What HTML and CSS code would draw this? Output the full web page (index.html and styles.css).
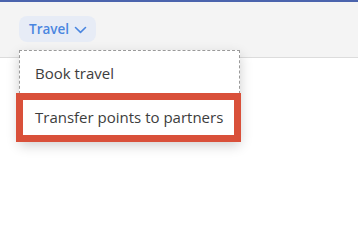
FILE: index.html
```html
<!DOCTYPE html>
<html lang="en">
<head>
	<meta charset="UTF-8">
	<title>Travel menu</title>
	<link rel="stylesheet" href="styles.css">
</head>
<body>
<div class='page'>
	<div class='bar'>
		<span class='pill'>Travel
			<svg width="13" height="8" viewBox="0 0 13 8"><path d="M1.5 1.5 L6.5 6.3 L11.5 1.5" fill="none" stroke="#4a86e0" stroke-width="1.6" stroke-linecap="round" stroke-linejoin="round"/></svg>
		</span>
	</div>
	<div class='menu'>
		<div class='item first'>Book travel</div>
		<div class='item active'>Transfer points to partners</div>
	</div>
</div>
</body>
</html>
```

FILE: styles.css
```css
html, body{
	margin:0;
	height:100%;
	background:#fff;
	font-family: 'Open Sans', 'Noto Sans', sans-serif;
}
.page{
	position:relative;
	height:100%;
}
.bar{
	height:41px;
	padding:14px 0 0 19px;
	background:#f4f4f4;
	border-top:2px solid #4b64ad;
	border-bottom:1px solid #dcdcdc;
}
.pill{
	display:inline-flex;
	align-items:center;
	gap:5px;
	height:26px;
	padding:0 9px 0 10px;
	border-radius:8px;
	background:#e7ecf6;
	color:#4a86e0;
	font-size:13.5px;
	font-weight:600;
}
.pill svg{
	margin-top:1px;
}
.menu{
	position:absolute;
	z-index:2;
	top:50px;
	left:19px;
	width:219px;
	background:#fff;
	border:1px dashed #9a9a9a;
	border-bottom:none;
	box-shadow:0 5px 12px rgba(0,0,0,.2);
}
.item{
	color:#3d3d3d;
	font-size:15px;
	padding:0 15px;
	white-space:nowrap;
}
.first{
	height:42px;
	line-height:44px;
}
.active{
	margin:0 -2px -2px -4px;
	border:7px solid #d9503a;
	height:35px;
	line-height:34px;
	padding:0 4px 0 12px;
}
```
